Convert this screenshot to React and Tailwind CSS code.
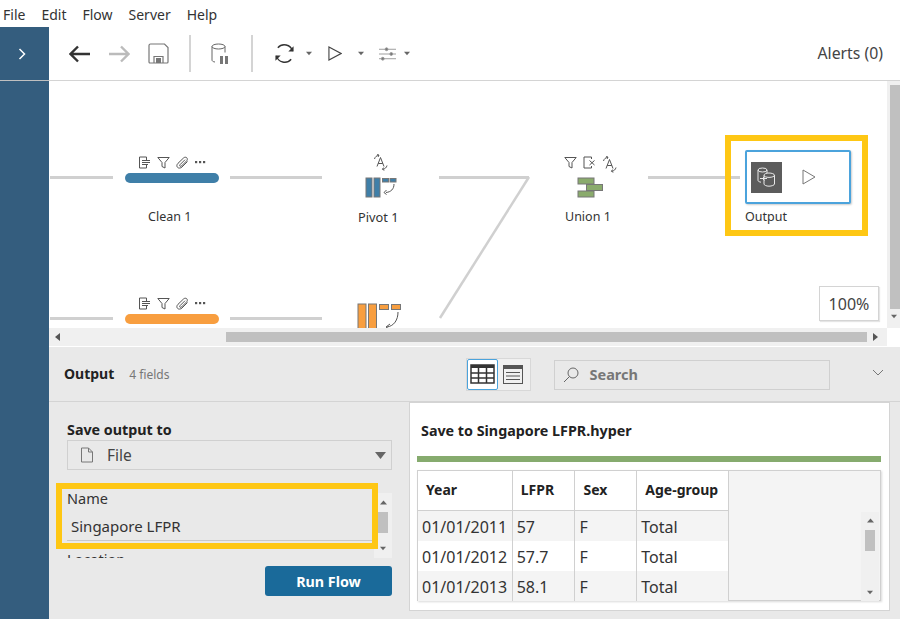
import React from 'react';

const menus = ['File', 'Edit', 'Flow', 'Server', 'Help'];
const rows = [
  ['01/01/2011', '57', 'F', 'Total'],
  ['01/01/2012', '57.7', 'F', 'Total'],
  ['01/01/2013', '58.1', 'F', 'Total'],
];
const cols = ['w-[95px]', 'w-[63px]', 'w-[62px]', 'w-[91px]'];

function Caret({ className = '' }) {
  return (
    <svg width="6" height="5" viewBox="0 0 7 5" className={className}>
      <path d="M0 .5h7L3.5 4.5z" fill="#666" />
    </svg>
  );
}

function Sep() {
  return <div className="w-[2px] h-[37px] bg-[#d4d4d4]" />;
}

function DocIcon() {
  return (
    <svg width="13" height="13" viewBox="0 0 13 13" fill="none" stroke="#555" strokeWidth="1">
      <path d="M8.5 4V1H1.5V12H8.5V9" />
      <path d="M4 4.5h8M4 6.5h8M4 8.5h6" />
    </svg>
  );
}

function FilterIcon() {
  return (
    <svg width="13" height="13" viewBox="0 0 13 13" fill="none" stroke="#555" strokeWidth="1">
      <path d="M.8 1.5h11.4L8 6.5V12L5 10.5v-4z" />
    </svg>
  );
}

function ClipIcon() {
  return (
    <svg width="13" height="13" viewBox="0 0 13 13" fill="none" stroke="#555" strokeWidth="1">
      <path d="M11.5 5.5L6 11c-1.400 1.400-3.600 1.400-4.500 .3-1-1-.8-2.800.5-4L7.500 2c1-1 2.600-1 3.300-.2.800.8.700 2.200-.2 3.100L5.500 10c-.5.5-1.200.5-1.600.1-.4-.4-.3-1 .2-1.500L9 3.700" />
    </svg>
  );
}

function DotsIcon() {
  return (
    <svg width="11" height="13" viewBox="0 0 11 13" fill="#555">
      <rect x="0" y="5" width="2.200" height="2.200" />
      <rect x="4" y="5" width="2.200" height="2.200" />
      <rect x="8" y="5" width="2.200" height="2.200" />
    </svg>
  );
}

function RenameIcon() {
  return (
    <svg width="15" height="17" viewBox="0 0 15 17" fill="none" stroke="#555" strokeWidth="1">
      <path d="M4 12.5L7.5 3.5l3.5 9M5.2 9.5h4.6" />
      <path d="M1.500 5C2 3 3.500 1.500 6 1.200M4.200 .3L6 1.200 5 3" />
      <path d="M14 11.500c-.5 2-2 3.600-4.500 3.800M11.300 16.300L9.500 15.300l1-1.700" />
    </svg>
  );
}

function CrossDocIcon() {
  return (
    <svg width="13" height="13" viewBox="0 0 13 13" fill="none" stroke="#555" strokeWidth="1">
      <path d="M8.5 3V1H1V12H8.5V10" />
      <path d="M6.500 4.500l5 4.500M11.500 4.500l-5 4.500" />
    </svg>
  );
}

function PivotIcon() {
  return (
    <svg width="32" height="21" viewBox="0 0 32 21">
      <rect x="1" y="1" width="6" height="19" fill="#3f7fa8" stroke="#777" />
      <rect x="9" y="1" width="6" height="19" fill="#3f7fa8" stroke="#777" />
      <rect x="17.500" y="1.500" width="6" height="3.500" fill="#3f7fa8" stroke="#777" />
      <rect x="25" y="1.500" width="6" height="3.500" fill="#3f7fa8" stroke="#777" />
      <path d="M29 7c0 5-3 8-8 8.500M21.500 13l-2.500 2.500 2.500 2" fill="none" stroke="#555" />
    </svg>
  );
}

function UnionIcon() {
  return (
    <svg width="27" height="21" viewBox="0 0 27 21">
      <rect x="1" y="1" width="16" height="6" fill="#8aab6c" stroke="#777" />
      <rect x="9.500" y="7.500" width="16" height="6" fill="#8aab6c" stroke="#777" />
      <rect x="1" y="14" width="16" height="6" fill="#8aab6c" stroke="#777" />
    </svg>
  );
}

function NodeTools({ left, top }) {
  return (
    <div className="absolute flex items-center gap-[6px]" style={{ left, top }}>
      <DocIcon />
      <FilterIcon />
      <ClipIcon />
      <DotsIcon />
    </div>
  );
}

function Line({ left, top, width }) {
  return <div className="absolute h-[3px] bg-[#d0d0d0]" style={{ left, top, width }} />;
}

function Canvas() {
  return (
    <div className="relative flex-1 overflow-hidden bg-white">
      <Line left={1} top={95} width={63} />
      <Line left={181} top={95} width={92} />
      <Line left={390} top={95} width={90} />
      <Line left={599} top={95} width={92} />
      <Line left={1} top={236} width={63} />
      <Line left={181} top={236} width={92} />
      <svg className="absolute left-[380px] top-[90px]" width="110" height="160" viewBox="0 0 110 160">
        <path d="M100 6L11 147" fill="none" stroke="#d0d0d0" strokeWidth="2.500" />
      </svg>

      <NodeTools left={89} top={75} />
      <div className="absolute left-[76px] top-[92px] w-[94px] h-[10px] rounded-full bg-[#3f7fa8]" />
      <div className="absolute left-[99px] top-[128px] text-[12.500px] leading-[16px] text-[#333]">Clean 1</div>

      <NodeTools left={89} top={216} />
      <div className="absolute left-[76px] top-[233px] w-[94px] h-[10px] rounded-full bg-[#f89e3f]" />

      <div className="absolute left-[324px] top-[73px]"><RenameIcon /></div>
      <div className="absolute left-[316px] top-[96px]"><PivotIcon /></div>
      <div className="absolute left-[309px] top-[128px] text-[12.800px] leading-[16px] text-[#333]">Pivot 1</div>

      <div className="absolute left-[308px] top-[222px]">
        <svg width="45" height="30" viewBox="0 0 45 30">
          <rect x="1" y="1" width="8" height="28" fill="#f89e3f" stroke="#777" />
          <rect x="11.500" y="1" width="8" height="28" fill="#f89e3f" stroke="#777" />
          <rect x="22.500" y="1.500" width="9" height="5" fill="#f89e3f" stroke="#777" />
          <rect x="34.500" y="1.500" width="9" height="5" fill="#f89e3f" stroke="#777" />
          <path d="M41 9c0 8-4 14-11 15M33 21l-4 3 4 3" fill="none" stroke="#555" />
        </svg>
      </div>

      <div className="absolute left-[515px] top-[75px] flex items-start gap-[6px]">
        <FilterIcon />
        <CrossDocIcon />
        <RenameIcon />
      </div>
      <div className="absolute left-[528px] top-[96px]"><UnionIcon /></div>
      <div className="absolute left-[516px] top-[128px] text-[12.500px] leading-[16px] text-[#333]">Union 1</div>

      <div className="absolute left-[676px] top-[54px] w-[143px] h-[101px] border-[6px] border-[#fec714]">
        <div className="absolute left-[14px] top-[9px] w-[106px] h-[54px] rounded-[2px] border-2 border-[#4ba3dc] bg-white shadow-[1px_1px_2px_rgba(0,0,0,0.2)] flex items-center pl-[4px]">
          <div className="w-[31px] h-[31px] bg-[#5c5c5c] flex items-center justify-center">
            <svg width="19" height="20" viewBox="0 0 19 20" fill="none" stroke="#e8e8e8" strokeWidth="1">
              <ellipse cx="5.500" cy="3" rx="4.500" ry="2" />
              <path d="M1 3v10.500c0 .8 1.500 1.500 3 1.700M10 3v3" />
              <path d="M7 8.200c0-1.200 2.300-2.200 5-2.200s5.500 1 5.500 2.200-2.500 2.200-5.500 2.200-5-1-5-2.200z" />
              <path d="M7 8.500v8.500c0 1.100 2.300 2.200 5 2.200s5.500-1.100 5.500-2.200V8.200" />
              <path d="M3 11.500h7M7.500 9.500l-2 2 2 2" />
            </svg>
          </div>
          <svg width="14" height="16" viewBox="0 0 14 16" className="ml-[20px]" fill="none" stroke="#777" strokeWidth="1">
            <path d="M1 1l12 7-12 7z" />
          </svg>
        </div>
        <div className="absolute left-[14px] top-[68px] text-[12.500px] leading-[16px] text-[#333]">Output</div>
      </div>

      <div className="absolute left-[770px] top-[205px] w-[60px] h-[35px] bg-white border border-[#d4d4d4] shadow-[1px_1px_1px_rgba(0,0,0,0.1)] flex items-center justify-center text-[16px] text-[#444]">100%</div>
    </div>
  );
}

function VScroll() {
  return (
    <div className="w-[13px] bg-[#f0f0f0] flex flex-col items-end">
      <div className="w-[10px] flex-1 mt-[4px] mb-[5px] bg-[#c0c0c0]" />
      <div className="w-[13px] h-[14px] flex items-start justify-center pl-[1px]"><Caret /></div>
    </div>
  );
}

function HScroll() {
  return (
    <div className="h-[19px] flex bg-white">
      <div className="w-[838px] h-[18px] bg-[#f0f0f0] flex items-center">
        <svg width="5" height="8" viewBox="0 0 5 8" className="ml-[6px]"><path d="M5 0v8L0 4z" fill="#555" /></svg>
        <div className="ml-[166px] w-[641px] h-[10px] bg-[#c0c0c0]" />
        <svg width="5" height="8" viewBox="0 0 5 8" className="ml-[6px]"><path d="M0 0v8l5-4z" fill="#555" /></svg>
      </div>
    </div>
  );
}

function PanelHeader() {
  return (
    <div className="h-[55px] flex items-center border-b border-[#d4d4d4] relative">
      <div className="ml-[15px] mb-[2px] text-[14px] font-bold text-[#222]">Output</div>
      <div className="ml-[15px] mt-[2px] text-[12px] text-[#777]">4 fields</div>
      <div className="ml-[297px] w-[65px] h-[33px] border border-[#d8d8d8] flex items-center bg-[#f0f0f0]">
        <div className="w-[31px] h-[31px] bg-white border border-[#4ba3dc] rounded-[2px] flex items-center justify-center">
          <svg width="25" height="20" viewBox="0 0 25 20" fill="none" stroke="#333" strokeWidth="1.500">
            <rect x="1" y="1" width="23" height="18" />
            <path d="M1 2.500h23" strokeWidth="3" />
            <path d="M1 9h23M1 14h23M8.500 4v15M16.500 4v15" />
          </svg>
        </div>
        <div className="w-[30px] h-[31px] flex items-center justify-center">
          <svg width="20" height="19" viewBox="0 0 20 19" fill="none" stroke="#555" strokeWidth="1">
            <rect x=".5" y=".5" width="19" height="18" />
            <path d="M.5 2.500h19" strokeWidth="3" />
            <path d="M3 7.500h14M3 11h14M3 14.500h14" />
          </svg>
        </div>
      </div>
      <div className="ml-[23px] mt-[1px] w-[276px] h-[30px] border border-[#d0d0d0] flex items-center pl-[8px]">
        <svg width="17" height="17" viewBox="0 0 17 17" fill="none" stroke="#666" strokeWidth="1">
          <circle cx="10" cy="7" r="5" />
          <path d="M6.500 10.500L1 16" />
        </svg>
        <span className="ml-[9px] text-[14.500px] font-bold text-[#777]">Search</span>
      </div>
      <svg width="12" height="7" viewBox="0 0 12 7" className="ml-[42px] mb-[3px]" fill="none" stroke="#777" strokeWidth="1">
        <path d="M1 1l5 5 5-5" />
      </svg>
    </div>
  );
}

function LeftPane() {
  return (
    <div className="w-[360px] pl-[18px] pt-[18px] flex flex-col">
      <div className="text-[14.300px] font-bold leading-[20px] text-[#222]">Save output to</div>
      <div className="w-[325px] h-[30px] border border-[#d0d0d0] flex items-center pl-[12px] pr-[5px]">
        <svg width="14" height="16" viewBox="0 0 14 16" fill="none" stroke="#777" strokeWidth="1">
          <path d="M1.500 1h7l4 4v10h-11zM8.500 1v4h4" />
        </svg>
        <span className="ml-[13px] pt-[2px] text-[15.500px] text-[#444]">File</span>
        <svg width="11" height="7" viewBox="0 0 11 7" className="ml-auto"><path d="M0 0h11L5.500 7z" fill="#666" /></svg>
      </div>

      <div className="relative mt-[13px] h-[75px] w-[325px]">
        <div className="absolute right-0 top-[10px] w-[18px] h-[65px] bg-[#f0f0f0] flex flex-col items-center justify-between py-[7px]">
          <svg width="7" height="5" viewBox="0 0 7 5"><path d="M0 4.500h7L3.500 .5z" fill="#666" /></svg>
          <div className="absolute top-[19px] w-[10px] h-[21px] bg-[#c0c0c0]" />
          <Caret />
        </div>
        <div className="absolute -left-[11px] top-0 w-[322px] h-[66px] border-[6px] border-[#fec714]">
          <div className="ml-[5px] -mt-[1px] text-[14.500px] leading-[20px] text-[#333]">Name</div>
          <div className="ml-[9px] mt-[8px] text-[15px] leading-[20px] text-[#333]">Singapore LFPR</div>
          <div className="ml-[5px] mt-[4px] h-[1px] bg-[#c8c8c8]" />
        </div>
        <div className="absolute left-0 top-[66px] w-[300px] h-[9px] overflow-hidden text-[14.500px] leading-[20px] text-[#333]">Location</div>
      </div>

      <button type="button" className="self-end mr-[17px] mt-[8px] pt-[1px] w-[127px] h-[30px] rounded-[3px] bg-[#1a6a9a] text-white text-[14.300px] font-bold">
        Run Flow
      </button>
    </div>
  );
}

function PreviewTable() {
  return (
    <div className="mx-[7px] mt-[8px] w-[464px] h-[131px] border border-[#d0d0d0] bg-[#f4f4f4] shadow-[1px_1px_2px_rgba(0,0,0,0.15)] flex relative">
      <div className="w-[311px] border-r border-[#d0d0d0]">
        <div className="h-[40px] flex bg-white border-b border-[#d0d0d0] text-[14px] font-bold text-[#222]">
          {['Year', 'LFPR', 'Sex', 'Age-group'].map((h, i) => (
            <div key={h} className={`${cols[i]} flex items-center pb-[2px] pl-[8px] ${i < 3 ? 'border-r border-[#d0d0d0]' : ''}`}>{h}</div>
          ))}
        </div>
        {rows.map((r, ri) => (
          <div key={r[0]} className={`h-[30px] flex text-[16px] text-[#333] ${ri % 2 === 1 ? 'bg-white' : 'bg-[#f4f4f4]'}`}>
            {r.map((c, i) => (
              <div key={i} className={`${cols[i]} flex items-center pl-[4px] pt-[1px] ${i < 3 ? 'border-r border-[#d0d0d0]' : ''}`}>{c}</div>
            ))}
          </div>
        ))}
      </div>
      <div className="absolute right-[1px] top-[41px] w-[18px] h-[89px] bg-[#f0f0f0] flex flex-col items-center justify-between py-[6px]">
        <svg width="7" height="5" viewBox="0 0 7 5"><path d="M0 4.500h7L3.500 .5z" fill="#666" /></svg>
        <div className="absolute top-[18px] w-[10px] h-[21px] bg-[#c0c0c0]" />
        <Caret />
      </div>
    </div>
  );
}

function RightPane() {
  return (
    <div className="w-[481px] h-[209px] mr-[10px] bg-white border border-[#d4d4d4] px-[7px]">
      <div className="h-[53px] flex items-center pl-[4px] pt-[2px] text-[14.300px] font-bold text-[#222]">Save to Singapore LFPR.hyper</div>
      <div className="h-[6px] w-[464px] bg-[#86ab6e]" />
      <div className="-mx-[7px]"><PreviewTable /></div>
    </div>
  );
}

export default function App() {
  return (
    <div className="w-[900px] h-[619px] overflow-hidden bg-white flex flex-col font-['Noto_Sans','Open_Sans',sans-serif]">
      <div className="h-[27px] flex items-center gap-[16px] pl-[3px] pt-[2px] text-[14px] text-[#333] shrink-0">
        {menus.map((m) => <span key={m}>{m}</span>)}
      </div>
      <div className="flex-1 flex min-h-0">
        <div className="w-[49px] bg-[#345d7e] shrink-0 flex flex-col">
          <div className="h-[54px] border-b border-[#c0c0c0] flex items-center justify-center pr-[5px]">
            <svg width="8" height="12" viewBox="0 0 8 12" fill="none" stroke="#fff" strokeWidth="1.500">
              <path d="M1.500 1l5 5-5 5" />
            </svg>
          </div>
        </div>
        <div className="flex-1 flex flex-col min-w-0">
          <div className="h-[54px] shrink-0 border-b border-[#d4d4d4] flex items-center pl-[20px] pr-[17px]">
            <svg width="21" height="18" viewBox="0 0 21 18" fill="none" stroke="#333" strokeWidth="2.400"><path d="M21 9H1.500M9 1.500L1.500 9 9 16.500" /></svg>
            <svg width="21" height="18" viewBox="0 0 21 18" className="ml-[19px]" fill="none" stroke="#bbb" strokeWidth="2.400"><path d="M0 9h19.500M12 1.500L19.500 9 12 16.500" /></svg>
            <svg width="21" height="21" viewBox="0 0 21 21" className="ml-[18px]" fill="none" stroke="#777" strokeWidth="1.200">
              <path d="M2.500 1h14L20 4.500V19a1 1 0 0 1-1 1H2a1 1 0 0 1-1-1V2.500A1.500 1.500 0 0 1 2.500 1z" />
              <path d="M6 20v-6.500h9V20" />
              <rect x="8" y="15" width="5" height="5" fill="#777" stroke="none" />
            </svg>
            <div className="ml-[20px]"><Sep /></div>
            <svg width="19" height="22" viewBox="0 0 19 22" className="ml-[20px]" fill="none" stroke="#666" strokeWidth="1">
              <ellipse cx="7.500" cy="3.500" rx="6.500" ry="2.500" />
              <path d="M1 3.500V17c0 1 1 1.800 3 2M14 3.500v6" />
              <rect x="9" y="13" width="3" height="8" fill="#777" stroke="none" />
              <rect x="14" y="13" width="3" height="8" fill="#777" stroke="none" />
            </svg>
            <div className="ml-[21px]"><Sep /></div>
            <svg width="21" height="21" viewBox="0 0 22 22" className="ml-[21px]" fill="none" stroke="#333" strokeWidth="1.400">
              <path d="M19.500 8.500A9 9 0 0 0 4 5M2.500 13.500A9 9 0 0 0 18 17" />
              <path d="M20.500 3.500v5.500h-5.500z" fill="#333" stroke="none" />
              <path d="M1.500 18.500V13H7z" fill="#333" stroke="none" />
            </svg>
            <Caret className="ml-[11px]" />
            <svg width="14" height="15" viewBox="0 0 15 16" className="ml-[16px]" fill="none" stroke="#444" strokeWidth="1.200"><path d="M1 1l13 7-13 7z" /></svg>
            <Caret className="ml-[16px]" />
            <svg width="17" height="14" viewBox="0 0 18 14" className="ml-[15px]" fill="none" stroke="#999" strokeWidth="1">
              <path d="M0 2h18M0 7h18M0 12h18" />
              <circle cx="8" cy="2" r="1.500" fill="#777" />
              <circle cx="13" cy="7" r="1.500" fill="#777" />
              <circle cx="4" cy="12" r="1.500" fill="#777" />
            </svg>
            <Caret className="ml-[8px]" />
            <span className="ml-auto text-[15.800px] text-[#444]">Alerts (0)</span>
          </div>
          <div className="h-[247px] shrink-0 flex">
            <Canvas />
            <VScroll />
          </div>
          <HScroll />
          <div className="flex-1 bg-[#e9e9e9] flex flex-col min-h-0">
            <PanelHeader />
            <div className="flex justify-between">
              <LeftPane />
              <RightPane />
            </div>
          </div>
        </div>
      </div>
    </div>
  );
}
